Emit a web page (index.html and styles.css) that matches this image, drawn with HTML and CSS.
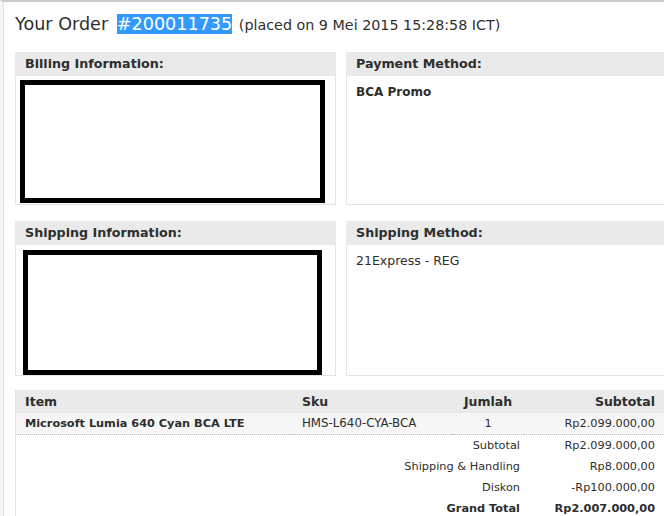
FILE: index.html
```html
<!DOCTYPE html>
<html>
<head>
<meta charset="utf-8">
<title>Your Order #200011735</title>
<link rel="stylesheet" href="styles.css">
</head>
<body>
<div class="page">
	<h1 class="order_title">Your Order <span class="order_no">#200011735</span> <span class="placed">(placed on 9 Mei 2015 15:28:58 ICT)</span></h1>

	<div class="box_row first_row">
		<div class="box">
			<h2 class="box_head">Billing Information:</h2>
			<div class="box_body billing_body">
				<div class="redact billing_redact"></div>
			</div>
		</div>
		<div class="box">
			<h2 class="box_head">Payment Method:</h2>
			<div class="box_body text_body">
				<p class="strong">BCA Promo</p>
			</div>
		</div>
	</div>

	<div class="box_row second_row">
		<div class="box">
			<h2 class="box_head">Shipping Information:</h2>
			<div class="box_body shipping_body">
				<div class="redact shipping_redact"></div>
			</div>
		</div>
		<div class="box">
			<h2 class="box_head">Shipping Method:</h2>
			<div class="box_body text_body">
				<p>21Express - REG</p>
			</div>
		</div>
	</div>

	<table class="items">
		<thead>
			<tr>
				<th class="col_item">Item</th>
				<th class="col_sku">Sku</th>
				<th class="col_qty">Jumlah</th>
				<th class="col_sub">Subtotal</th>
			</tr>
		</thead>
		<tbody>
			<tr class="item_row">
				<td class="col_item strong">Microsoft Lumia 640 Cyan BCA LTE</td>
				<td class="col_sku">HMS-L640-CYA-BCA</td>
				<td class="col_qty">1</td>
				<td class="col_sub">Rp2.099.000,00</td>
			</tr>
		</tbody>
		<tfoot>
			<tr>
				<td colspan="3" class="total_label">Subtotal</td>
				<td class="col_sub">Rp2.099.000,00</td>
			</tr>
			<tr>
				<td colspan="3" class="total_label">Shipping &amp; Handling</td>
				<td class="col_sub">Rp8.000,00</td>
			</tr>
			<tr>
				<td colspan="3" class="total_label">Diskon</td>
				<td class="col_sub">-Rp100.000,00</td>
			</tr>
			<tr class="grand">
				<td colspan="3" class="total_label">Grand Total</td>
				<td class="col_sub">Rp2.007.000,00</td>
			</tr>
		</tfoot>
	</table>
</div>
</body>
</html>
```

FILE: styles.css
```css
html, body {
	margin: 0;
	padding: 0;
	overflow: hidden;
}
body {
	border-top: 2px solid #c9ccd1;
	border-left: 3px solid #f4f4f4;
	font-family: "DejaVu Sans", Verdana, sans-serif;
	font-size: 12px;
	color: #2e2e2e;
	background: #fff;
	height: 514px;
}
.page {
	border-left: 1px solid #e2e2e2;
	padding-left: 11px;
	width: 652px;
	height: 514px;
}
.order_title {
	margin: 0;
	padding-top: 11px;
	height: 22px;
	font-size: 17.6px;
	font-weight: normal;
	line-height: 22px;
	color: #2e2e2e;
	white-space: nowrap;
}
.order_no {
	background: #3399ff;
	color: #fff;
	margin-left: 3px;
}
.placed {
	font-size: 14.3px;
	margin-left: 1px;
}
.box_row {
	display: flex;
	gap: 10px;
}
.first_row {
	margin-top: 17px;
	margin-bottom: 16px;
}
.second_row {
	margin-bottom: 14px;
}
.box {
	width: 321px;
	flex: none;
	border: 1px solid #e4e4e4;
	border-top: 0;
	box-sizing: border-box;
}
.box_head {
	margin: 0 -1px;
	padding: 0 10px;
	height: 24px;
	line-height: 24px;
	background: #eaeaea;
	font-size: 12.7px;
	font-weight: bold;
	color: #2e2e2e;
}
.box_body {
	box-sizing: border-box;
}
.first_row .box_body {
	height: 128px;
}
.second_row .box_body {
	height: 130px;
}
.billing_body {
	padding: 4px 0 0 4px;
}
.shipping_body {
	padding: 5px 0 0 7px;
}
.text_body {
	padding: 8px 9px;
}
.text_body p {
	margin: 0;
	line-height: 16px;
	font-size: 12.5px;
}
.text_body p.strong {
	font-size: 12px;
}
.strong {
	font-weight: bold;
}
.redact {
	border: 5px solid #000;
	box-sizing: border-box;
}
.billing_redact {
	width: 305px;
	height: 123px;
}
.shipping_redact {
	width: 299px;
	height: 125px;
}
.items {
	width: 652px;
	border-collapse: collapse;
	border-left: 1px solid #e4e4e4;
	font-size: 11.3px;
}
.items th {
	background: #eaeaea;
	height: 23px;
	padding: 0 10px 0 9px;
	font-size: 12.5px;
	text-align: left;
	line-height: 23px;
}
.items td {
	height: 21px;
	padding: 0 10px 0 9px;
	line-height: 21px;
}
.col_item {
	width: 258px;
}
.col_sku {
	width: 140px;
}
.items td.col_sku {
	font-size: 11.8px;
}
.items .col_qty {
	width: 72px;
	padding: 0;
	text-align: center;
}
.items .col_sub {
	padding-right: 12px;
	text-align: right;
}
.item_row td {
	background: #f6f6f6;
	border-bottom: 1px dotted #bbb;
}
.items .total_label {
	text-align: right;
	padding-right: 4px;
}
.grand td {
	font-weight: bold;
}
```
